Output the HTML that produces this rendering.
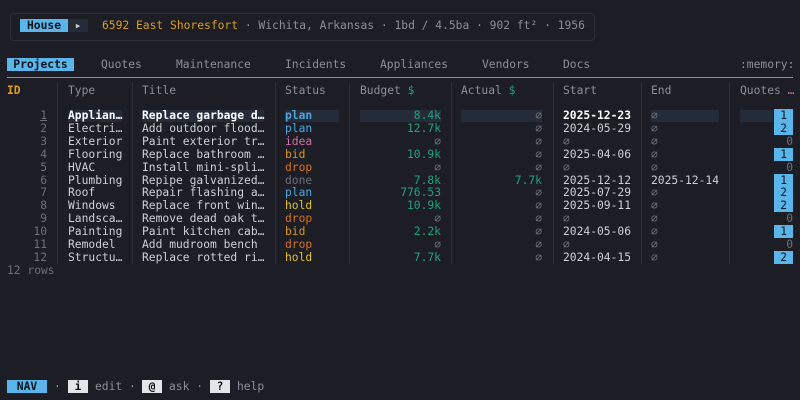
<!DOCTYPE html>
<html><head><style>
body{margin:0;width:800px;height:400px;background:#1c1d25;overflow:hidden;font-family:"DejaVu Sans Mono","Liberation Mono",monospace;font-size:11.3px;color:#cfd0d4;position:relative}
.a{position:absolute;white-space:pre;line-height:13px}
.r{text-align:right}
.dim{color:#8b8f99}
.g{color:#22a37c}
.n{color:#6c7079}
.vl{position:absolute;top:83px;height:181px;width:1px;background:#2c2f39}
.hl{background:#242c3a}
.badge{background:#5ab6ea;color:#10131a;padding:0 6px}
</style></head><body>
<div style="position:absolute;left:10px;top:13px;width:583px;height:26px;border:1px solid #2c2f38;border-radius:4px"></div>
<div class="a" style="left:20px;top:19px;background:#5ab6ea;color:#10131a;font-weight:bold;width:48px;text-align:center">House</div>
<div class="a" style="left:68px;top:19px;background:#252b38;color:#ccc;width:20px;text-align:center">▸</div>
<div class="a" style="left:102px;top:19px"><span style="color:#d99e1e">6592 East Shoresfort</span><span class="dim"> · Wichita, Arkansas · 1bd / 4.5ba · 902 ft² · 1956</span></div>

<div class="a" style="left:7px;top:58px;background:#5ab6ea;color:#10131a;font-weight:bold;width:67px;text-align:center">Projects</div>
<div class="a dim" style="left:101px;top:58px">Quotes</div>
<div class="a dim" style="left:176px;top:58px">Maintenance</div>
<div class="a dim" style="left:285px;top:58px">Incidents</div>
<div class="a dim" style="left:380px;top:58px">Appliances</div>
<div class="a dim" style="left:482px;top:58px">Vendors</div>
<div class="a dim" style="left:563px;top:58px">Docs</div>
<div class="a dim" style="left:740px;top:58px">:memory:</div>
<div style="position:absolute;left:7px;top:77px;width:786px;height:1px;background:#4aa3d8"></div>

<div class="vl" style="left:57px"></div><div class="vl" style="left:132px"></div><div class="vl" style="left:275px"></div><div class="vl" style="left:349px"></div><div class="vl" style="left:451px"></div><div class="vl" style="left:553px"></div><div class="vl" style="left:641px"></div><div class="vl" style="left:729px"></div>

<div class="a" style="left:7px;top:84px;color:#e0a020;font-weight:bold">ID</div>
<div class="a dim" style="left:68px;top:84px">Type</div>
<div class="a dim" style="left:142px;top:84px">Title</div>
<div class="a dim" style="left:285px;top:84px">Status</div>
<div class="a dim" style="left:360px;top:84px">Budget <span class="g">$</span></div>
<div class="a dim" style="left:461px;top:84px">Actual <span class="g">$</span></div>
<div class="a dim" style="left:563px;top:84px">Start</div>
<div class="a dim" style="left:651px;top:84px">End</div>
<div class="a dim" style="left:740px;top:84px">Quotes <span style="color:#d070a8">…</span></div>

<div style="position:absolute;top:110px;height:12px;left:68px;width:54px" class="hl"></div>
<div style="position:absolute;top:110px;height:12px;left:142px;width:122px" class="hl"></div>
<div style="position:absolute;top:110px;height:12px;left:285px;width:54px" class="hl"></div>
<div style="position:absolute;top:110px;height:12px;left:360px;width:81px" class="hl"></div>
<div style="position:absolute;top:110px;height:12px;left:461px;width:81px" class="hl"></div>
<div style="position:absolute;top:110px;height:12px;left:651px;width:68px" class="hl"></div>
<div style="position:absolute;top:110px;height:12px;left:740px;width:33px" class="hl"></div>

<div class="a r n" style="left:0;width:47px;top:110px;line-height:12.9px"><u>1</u>
2
3
4
5
6
7
8
9
10
11
12</div>
<div class="a" style="left:68px;top:110px;line-height:12.9px"><b style="color:#fff">Applian…</b>
Electri…
Exterior
Flooring
HVAC
Plumbing
Roof
Windows
Landsca…
Painting
Remodel
Structu…</div>
<div class="a" style="left:142px;top:110px;line-height:12.9px"><b style="color:#fff">Replace garbage d…</b>
Add outdoor flood…
Paint exterior tr…
Replace bathroom …
Install mini-spli…
Repipe galvanized…
Repair flashing a…
Replace front win…
Remove dead oak t…
Paint kitchen cab…
Add mudroom bench
Replace rotted ri…</div>
<div class="a" style="left:285px;top:110px;line-height:12.9px"><b style="color:#49a6e0">plan</b>
<span style="color:#49a6e0">plan</span>
<span style="color:#d070a8">idea</span>
<span style="color:#d89a1a">bid</span>
<span style="color:#d9701a">drop</span>
<span style="color:#6a6e78">done</span>
<span style="color:#49a6e0">plan</span>
<span style="color:#e0c030">hold</span>
<span style="color:#d9701a">drop</span>
<span style="color:#d89a1a">bid</span>
<span style="color:#d9701a">drop</span>
<span style="color:#e0c030">hold</span></div>
<div class="a r" style="left:340px;width:101px;top:110px;line-height:12.9px"><span class="g">8.4k</span>
<span class="g">12.7k</span>
<span class="n">⌀</span>
<span class="g">10.9k</span>
<span class="n">⌀</span>
<span class="g">7.8k</span>
<span class="g">776.53</span>
<span class="g">10.9k</span>
<span class="n">⌀</span>
<span class="g">2.2k</span>
<span class="n">⌀</span>
<span class="g">7.7k</span></div>
<div class="a r" style="left:441px;width:101px;top:110px;line-height:12.9px"><span class="n">⌀</span>
<span class="n">⌀</span>
<span class="n">⌀</span>
<span class="n">⌀</span>
<span class="n">⌀</span>
<span class="g">7.7k</span>
<span class="n">⌀</span>
<span class="n">⌀</span>
<span class="n">⌀</span>
<span class="n">⌀</span>
<span class="n">⌀</span>
<span class="n">⌀</span></div>
<div class="a" style="left:563px;top:110px;line-height:12.9px"><b style="color:#fff">2025-12-23</b>
2024-05-29
<span class="n">⌀</span>
2025-04-06
<span class="n">⌀</span>
2025-12-12
2025-07-29
2025-09-11
<span class="n">⌀</span>
2024-05-06
<span class="n">⌀</span>
2024-04-15</div>
<div class="a" style="left:651px;top:110px;line-height:12.9px"><span class="n">⌀</span>
<span class="n">⌀</span>
<span class="n">⌀</span>
<span class="n">⌀</span>
<span class="n">⌀</span>
2025-12-14
<span class="n">⌀</span>
<span class="n">⌀</span>
<span class="n">⌀</span>
<span class="n">⌀</span>
<span class="n">⌀</span>
<span class="n">⌀</span></div>
<div class="a r" style="left:740px;width:53px;top:110px;line-height:12.9px"><span class="badge">1</span>
<span class="badge">2</span>
<span class="n">0</span>
<span class="badge">1</span>
<span class="n">0</span>
<span class="badge">1</span>
<span class="badge">2</span>
<span class="badge">2</span>
<span class="n">0</span>
<span class="badge">1</span>
<span class="n">0</span>
<span class="badge">2</span></div>

<div class="a n" style="left:7px;top:264px">12 rows</div>

<div class="a" style="left:7px;top:380px;background:#5ab6ea;color:#10131a;font-weight:bold;width:40px;text-align:center">NAV</div>
<div class="a dim" style="left:54px;top:380px">·</div>
<div class="a" style="left:68px;top:380px;background:#e4e5e8;color:#111;width:20px;text-align:center;font-weight:bold">i</div>
<div class="a dim" style="left:95px;top:380px">edit ·</div>
<div class="a" style="left:142px;top:380px;background:#e4e5e8;color:#111;width:20px;text-align:center;font-weight:bold">@</div>
<div class="a dim" style="left:169px;top:380px">ask ·</div>
<div class="a" style="left:210px;top:380px;background:#e4e5e8;color:#111;width:20px;text-align:center;font-weight:bold">?</div>
<div class="a dim" style="left:237px;top:380px">help</div>
</body></html>
